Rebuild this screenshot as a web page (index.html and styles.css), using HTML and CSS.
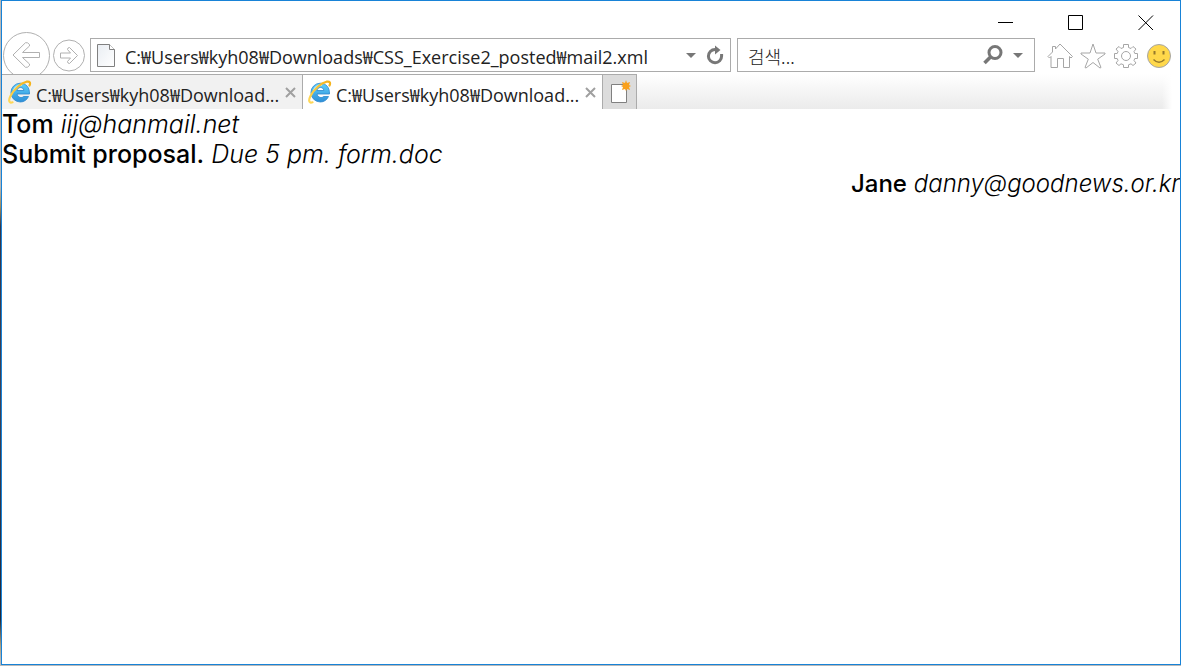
FILE: index.html
```
<!DOCTYPE html>
<html lang="ko">
<head>
<meta charset="utf-8">
<title>mail2.xml</title>
<link rel="stylesheet" href="styles.css">
</head>
<body>
<svg width="0" height="0" class="defs" aria-hidden="true">
  <defs>
    <linearGradient id="blue" x1="0" y1="0" x2="0" y2="1"><stop offset="0" stop-color="#5fd0fb"/><stop offset="1" stop-color="#2d8fd8"/></linearGradient>
    <linearGradient id="gold" x1="0" y1="1" x2="1" y2="0"><stop offset="0" stop-color="#ffd95a"/><stop offset="1" stop-color="#f5b21a"/></linearGradient>
    <linearGradient id="paper" x1="0" y1="0" x2="1" y2="1"><stop offset="0" stop-color="#e9edf2"/><stop offset="1" stop-color="#fff"/></linearGradient>
    <symbol id="ie" viewBox="0 0 24 24">
      <path d="M20.500 16.500C19 20 16 22 12.300 22A9.200 9.200 0 0 1 12.300 3.200C18 3.200 21.800 7.500 21.500 14H9C9.500 17.500 14 18.500 15.500 16.500ZM9 10.500H15.800C15.500 6.500 9.500 6.500 9 10.500Z" fill="url(#blue)" stroke="#2b86cd" stroke-width=".8" fill-rule="evenodd"/>
      <path d="M5.500 10.500C7 6.500 10 5 14 5.200" fill="none" stroke="#b5ecff" stroke-width="1.500"/>
      <path d="M4.500 22.300C1 23.500.2 20.500 2.500 16C6 9 13 3 18.500 1.700C22 1 22.700 3 21.500 5.500" fill="none" stroke="url(#gold)" stroke-width="2.200" stroke-linecap="round"/>
    </symbol>
  </defs>
</svg>
<div class="window">
  <header class="titlebar">
    <button class="caption" aria-label="Minimize"><svg width="16" height="16"><path d="M0 7.500H15" stroke="#000"/></svg></button>
    <button class="caption" aria-label="Maximize"><svg width="16" height="16"><path d="M.5.500H14.500V14.500H.5Z" fill="none" stroke="#000"/></svg></button>
    <button class="caption" aria-label="Close"><svg width="16" height="16"><path d="M.5.500L15 15M15 .5L.5 15" stroke="#000"/></svg></button>
  </header>
  <div class="toolbar">
    <button class="nav" aria-label="Back"><svg width="48" height="42" viewBox="0 0 48 42" fill="none" stroke="#b0b0b0"><circle cx="24.500" cy="23.500" r="23"/><path d="M11 23L23.500 10.700Q25.500 10 27.500 12.500V14L20.500 20.500H37.500V25.500H20.500L27.500 32V33.500Q25.500 36 23.500 35.300Z" stroke-linejoin="round"/></svg></button>
    <button class="nav" aria-label="Forward"><svg width="34" height="42" viewBox="0 0 34 42" fill="none" stroke="#b0b0b0"><circle cx="17" cy="23.500" r="15.500"/><path d="M25.500 23.500L17.500 31.500Q15.500 31.500 15.500 29.500L18.500 26H8.500V21H18.500L15.500 17.500Q15.500 15.500 17.500 15.500Z" stroke-linejoin="round"/></svg></button>
    <form class="field address">
      <svg width="18" height="23" viewBox="0 0 18 23"><path d="M.5.500H12.500L17.500 5.500V22.500H.5Z" fill="url(#paper)" stroke="#808080"/><path d="M12.500.5V5.500H17.500" fill="#fff" stroke="#808080"/></svg>
      <input class="text" type="text" aria-label="Address" value="C:₩Users₩kyh08₩Downloads₩CSS_Exercise2_posted₩mail2.xml">
      <button type="button" class="tool" aria-label="Show addresses"><svg width="10" height="5"><path d="M0 0H10L5 5Z" fill="#777"/></svg></button>
      <button type="button" class="tool" aria-label="Refresh"><svg width="18" height="20" viewBox="0 0 18 20"><path d="M9 4.500A6.600 6.600 0 1 0 15.600 11V9" fill="none" stroke="#777" stroke-width="3"/><path d="M9 .5L14.500 5L9 9.500Z" fill="#777"/></svg></button>
    </form>
    <form class="field search">
      <input class="text" type="text" aria-label="검색" placeholder="검색...">
      <button type="button" class="tool" aria-label="Search"><svg width="20" height="20" viewBox="0 0 20 20" fill="none" stroke="#777"><circle cx="12" cy="7.500" r="6" stroke-width="3"/><path d="M7.500 12L1.500 18" stroke-width="3.500"/></svg></button>
      <button type="button" class="tool" aria-label="Search options"><svg width="10" height="5"><path d="M0 0H10L5 5Z" fill="#777"/></svg></button>
    </form>
    <div class="actions">
      <button class="action" aria-label="Home"><svg width="26" height="26" viewBox="0 0 26 26" fill="none" stroke="#a6a6a6" stroke-linejoin="round"><path d="M13 1L25.500 13.500L24 15L22.500 13.500V24.500H16.500V15.500H10.500V24.500H4V13.500L2.500 15L1 13.500L5.500 9V3.500H8.500V6Z"/></svg></button>
      <button class="action" aria-label="Favorites"><svg width="26" height="26" viewBox="0 0 26 26" fill="none" stroke="#a6a6a6" stroke-linejoin="round"><path d="M13 1L16 10H25V11L17.700 16.200L21 24.500L20 25L13 19.500L6 25L5 24.500L8.300 16.200L1 11V10H10Z"/></svg></button>
      <button class="action" aria-label="Tools"><svg width="26" height="26" viewBox="0 0 26 26" fill="none" stroke="#a6a6a6" stroke-linejoin="round"><circle cx="13" cy="13" r="4.500"/><path d="M10.500 1.500H15.500V4.500L18 5.500L20 3.500L23 6L21 8.500L21.800 10.500H24.500V15.500H21.800L21 17.500L23 20L20 22.500L18 20.800L15.500 21.800V24.500H10.500V21.800L8 20.800L6 22.500L3 20L5 17.500L4.200 15.500H1.500V10.500H4.200L5 8.500L3 6L6 3.500L8 5.500L10.500 4.500Z"/></svg></button>
      <button class="action" aria-label="Feedback"><svg width="26" height="26" viewBox="0 0 26 26"><circle cx="13" cy="13" r="11.500" fill="#ffd84a" stroke="#a6a6a6"/><path d="M8.500 8V11.500M17.500 8V11.500" stroke="#967a2c" stroke-width="2"/><path d="M7.500 16.500Q13 22 18.500 16.500" fill="none" stroke="#967a2c" stroke-width="1.500"/></svg></button>
    </div>
  </div>
  <nav class="tabs">
    <div class="tab">
      <svg width="24" height="24"><use href="#ie"/></svg>
      <a class="title" href="#mail">C:₩Users₩kyh08₩Download...</a>
      <button class="close" aria-label="Close tab"><svg width="11" height="11"><path d="M1 1L10 10M10 1L1 10" stroke="#a0a0a0" stroke-width="2"/></svg></button>
    </div>
    <div class="tab active">
      <svg width="24" height="24"><use href="#ie"/></svg>
      <a class="title" href="#mail">C:₩Users₩kyh08₩Download...</a>
      <button class="close" aria-label="Close tab"><svg width="11" height="11"><path d="M1 1L10 10M10 1L1 10" stroke="#a0a0a0" stroke-width="2"/></svg></button>
    </div>
    <button class="newtab" aria-label="New tab"><svg width="22" height="24" viewBox="0 0 22 24"><path d="M2.500 4.500H17.500V22.500H2.500Z" fill="#fff" stroke="#808080"/><path d="M17 0L18 3L21 2L20 5L22 6L20 7L21 10L18 9L17 11L16 9L13 10L14 7L12 6L14 5L13 2L16 3Z" fill="#f9a01b"/></svg></button>
    <div class="rest"></div>
  </nav>
  <main class="page" id="mail">
    <p><b>Tom</b> <i>iij@hanmail.net</i></p>
    <p><b>Submit proposal.</b> <i>Due 5 pm.</i> <i>form.doc</i></p>
    <p class="to"><b>Jane</b> <i>danny@goodnews.or.kr</i></p>
  </main>
</div>
</body>
</html>
```
FILE: styles.css
```
* { box-sizing: border-box; }
body {
  margin: 0;
  padding: 0 0 1px 1px;
  height: 100vh;
  display: flex;
  background: linear-gradient(#b9b9b9 0 28%, #a08a5c 31%, #34364a 34%, #3d4258 60%, #20283a 93%, #b0a080 97%, #b9b9b9 99%);
}
.defs { position: absolute; }
svg { display: block; flex: none; }
button { border: 0; padding: 0; margin: 0; background: none; }
.window {
  flex: 1;
  min-width: 0;
  display: flex;
  flex-direction: column;
  border: 1px solid #1883d7;
  background: #fff;
  font-family: "Open Sans", "Noto Sans CJK KR", sans-serif;
  overflow: hidden;
}
.titlebar { display: flex; justify-content: flex-end; height: 31px; }
.caption { width: 70px; padding: 14px 0 0 28px; display: flex; align-items: flex-start; }
.toolbar { display: flex; height: 42px; }
.nav + .nav { margin-left: 2px; }
.field {
  display: flex;
  align-items: center;
  min-width: 0;
  height: 34px;
  margin: 6px 0 0;
  border: 1px solid #ababab;
}
.address { flex: 1 1 641px; margin-left: 4px; padding: 0 6px; }
.search { flex: 0 1 298px; margin-left: 6px; padding: 0 11px 0 10px; }
.text {
  flex: 1;
  min-width: 0;
  border: 0;
  padding: 0;
  background: none;
  outline: 0;
  color: #222;
  font: 18px/26px "Open Sans", "Noto Sans CJK KR", sans-serif;
}
.address .text { margin: 4px 0 0 10px; }
.search .text { margin-top: 4px; }
.search .text::placeholder { color: #222; opacity: 1; font-family: "Noto Sans CJK KR", sans-serif; font-weight: 300; }
.tool { margin-left: 10px; }
.actions { display: flex; margin: 0 5px 0 8px; }
.action { width: 33px; padding: 11px 0 0 4px; display: flex; align-items: flex-start; }
.tabs { display: flex; height: 35px; }
.tab {
  display: flex;
  align-items: center;
  width: 300px;
  padding: 0 6px;
  border-top: 1px solid #ababab;
  border-right: 1px solid #ababab;
  background: #f1f1f1;
}
.tab:first-child { width: 301px; }
.active { padding-left: 5px; background: #fff; }
.title {
  flex: 1;
  min-width: 0;
  margin: 6px 0 0 4px;
  white-space: nowrap;
  text-decoration: none;
  color: #222;
  font-size: 18px;
  line-height: 26px;
}
.newtab {
  width: 34px;
  padding: 0 0 0 6px;
  border-top: 1px solid #ababab;
  border-right: 1px solid #ababab;
  background: #dcdcdc;
}
.rest {
  flex: 1;
  margin-right: 8px;
  background: linear-gradient(90deg, transparent calc(100% - 10px), #fff), linear-gradient(#fff, #ebebeb);
}
.page {
  flex: 1;
  color: #000;
  font-family: Inter, "Liberation Sans", sans-serif;
  font-size: 25px;
  line-height: 30px;
}
.page p { margin: 0; white-space: nowrap; }
.page b { font-weight: 500; }
.page i { font-weight: 300; }
.page .to { text-align: right; font-size: 24px; }
```
